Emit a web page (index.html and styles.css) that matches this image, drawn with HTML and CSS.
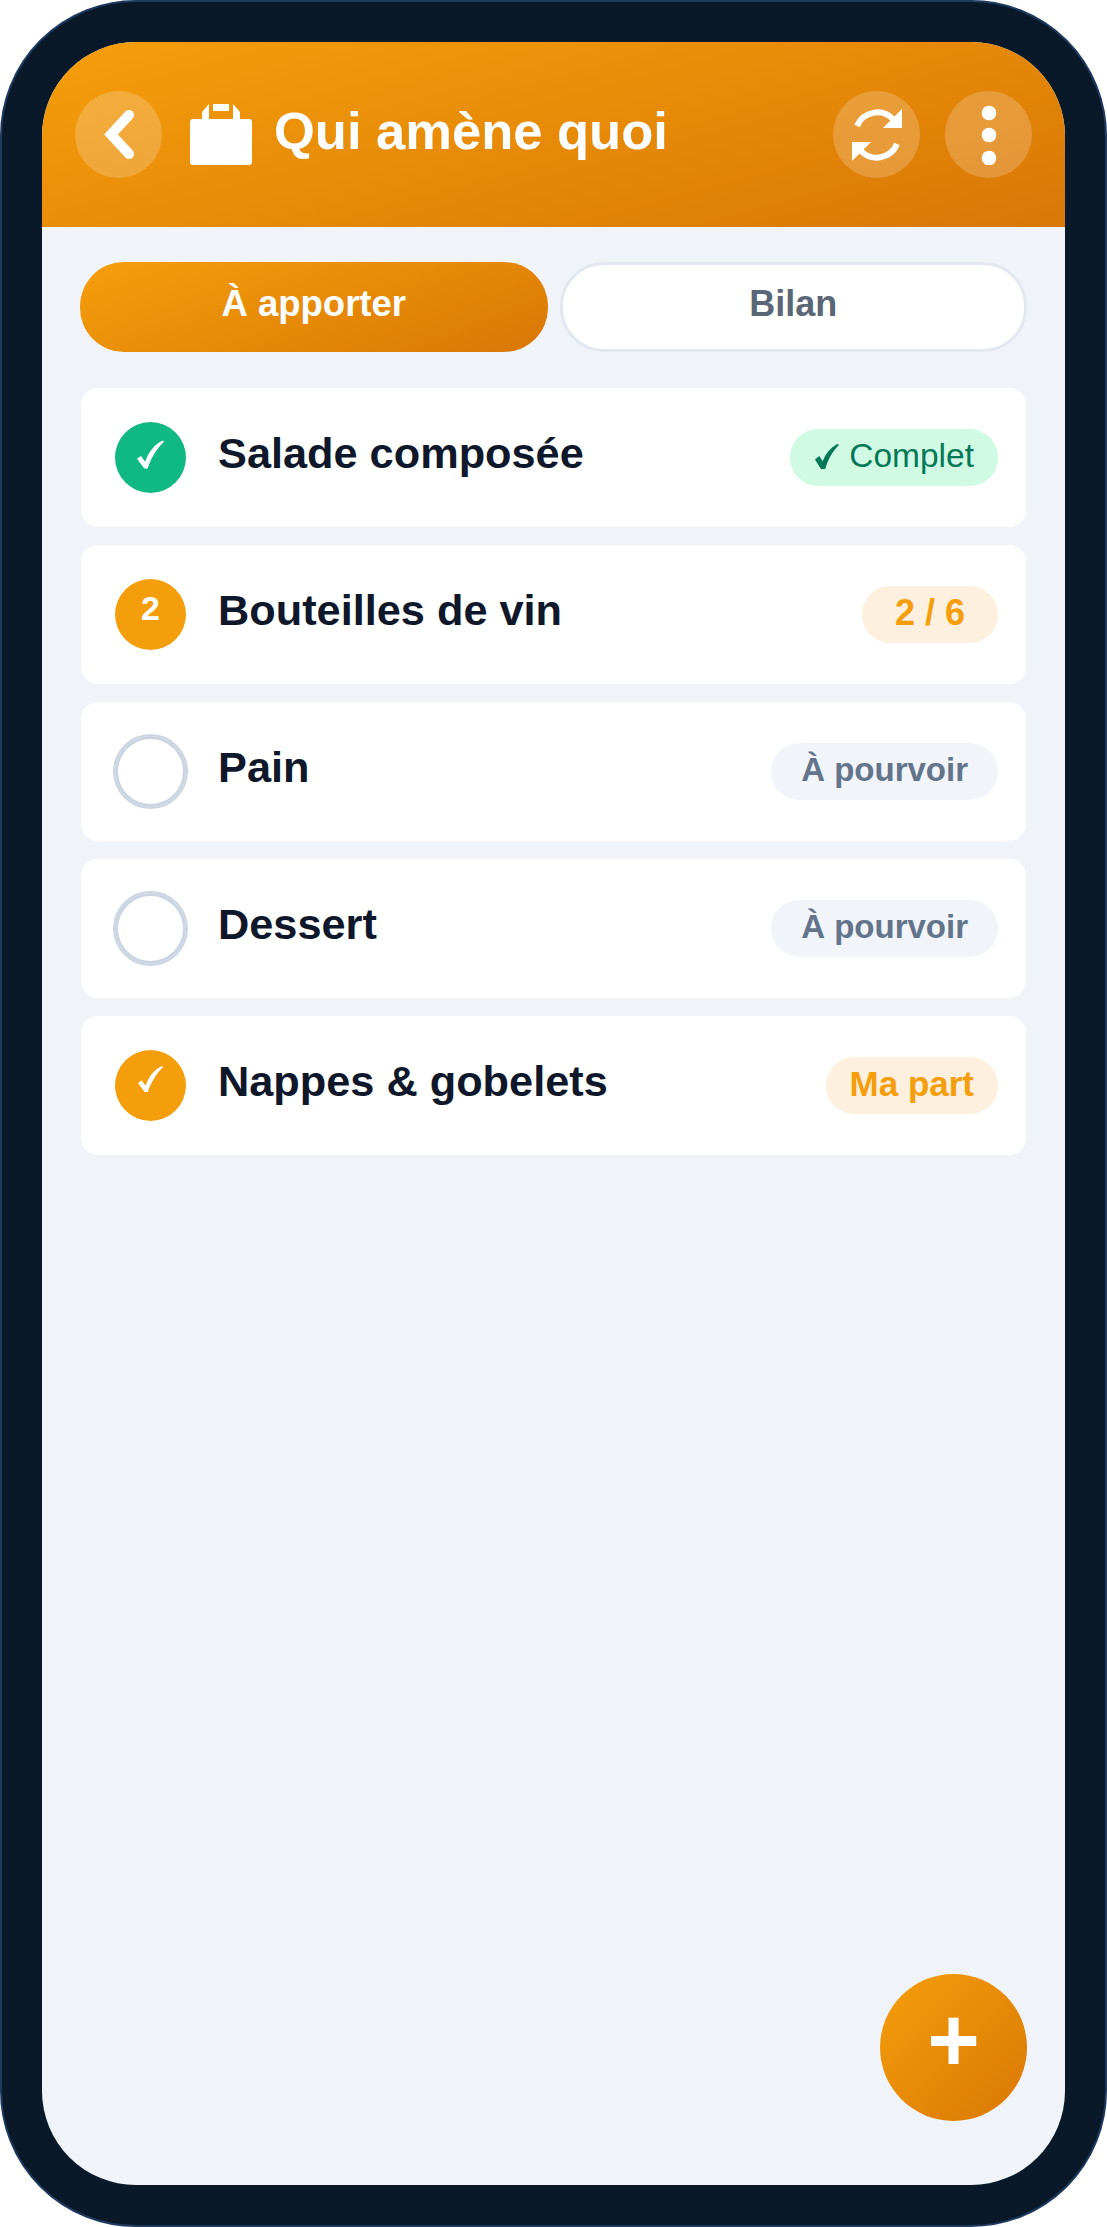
FILE: index.html

```html
<!DOCTYPE html>
<html lang="fr">
<head>
    <meta charset="UTF-8">
    <meta name="viewport" content="width=device-width, initial-scale=1.0">
    <title>Qui amène quoi</title>
    <link rel="stylesheet" href="styles.css">
</head>
<body>
    <div class="phone">
        <div class="screen">
            <header class="topbar">
                <button class="round-btn">
                    <svg width="30" height="49" viewBox="0 0 30 49">
                        <polyline points="25,5 7,24.5 25,44" fill="none" stroke="#fff" stroke-width="10" stroke-linecap="round"/>
                    </svg>
                </button>
                <svg class="bag" width="62" height="62" viewBox="0 0 62 62" fill="#fff">
                    <path d="M3 16H59Q62 16 62 19V59Q62 62 59 62H3Q0 62 0 59V19Q0 16 3 16Z"/>
                    <path d="M12 16V9L19 1V16Z"/>
                    <path d="M50 16V9L43 1V16Z"/>
                    <rect x="23" y="1" width="16" height="7"/>
                </svg>
                <h1 class="title">Qui amène quoi</h1>
                <button class="round-btn">
                    <svg width="52" height="52" viewBox="0 0 52 52">
                        <path d="M6 17A22 22 0 0 1 42 10" fill="none" stroke="#fff" stroke-width="6"/>
                        <path d="M51 0V19H32Z" fill="#fff"/>
                        <g transform="rotate(180 26 26)">
                            <path d="M6 17A22 22 0 0 1 42 10" fill="none" stroke="#fff" stroke-width="6"/>
                            <path d="M51 0V19H32Z" fill="#fff"/>
                        </g>
                    </svg>
                </button>
                <button class="round-btn">
                    <svg width="16" height="60" viewBox="0 0 16 60">
                        <circle cx="8" cy="8" r="7.3" fill="#fff"/>
                        <circle cx="8" cy="30" r="7.3" fill="#fff"/>
                        <circle cx="8" cy="53" r="7.3" fill="#fff"/>
                    </svg>
                </button>
            </header>

            <div class="tabs">
                <button class="tab active">À apporter</button>
                <button class="tab">Bilan</button>
            </div>

            <div class="list">
                <div class="item">
                    <span class="mark green">
                        <svg class="tick" width="27" height="29" viewBox="0 0 28 29">
                            <path d="M0 19L4 16L8.5 22C12 12 18 4 27 0L28 1C21 8 14.5 18 11 29H7.5Z" fill="#fff"/>
                        </svg>
                    </span>
                    <span class="name">Salade composée</span>
                    <span class="badge done">
                        <svg width="26" height="25" viewBox="0 0 28 29">
                            <path d="M0 18L5 14L9 20C12 12 18 4 26 0L28 1C21 8 15 18 12 29H7Z" fill="#047857"/>
                        </svg>
                        Complet
                    </span>
                </div>
                <div class="item">
                    <span class="mark orange number">2</span>
                    <span class="name">Bouteilles de vin</span>
                    <span class="badge partial count">2 / 6</span>
                </div>
                <div class="item">
                    <span class="mark empty"></span>
                    <span class="name">Pain</span>
                    <span class="badge open">À pourvoir</span>
                </div>
                <div class="item">
                    <span class="mark empty"></span>
                    <span class="name">Dessert</span>
                    <span class="badge open">À pourvoir</span>
                </div>
                <div class="item">
                    <span class="mark orange">
                        <svg class="tick small" width="25" height="26" viewBox="0 0 28 29">
                            <path d="M0 19L4 16L8.5 22C12 12 18 4 27 0L28 1C21 8 14.5 18 11 29H7.5Z" fill="#fff"/>
                        </svg>
                    </span>
                    <span class="name">Nappes &amp; gobelets</span>
                    <span class="badge partial">Ma part</span>
                </div>
            </div>

            <button class="fab">+</button>
        </div>
    </div>
</body>
</html>
```

FILE: styles.css

```css
* {
    box-sizing: border-box;
}

body {
    margin: 0;
    background-color: #fff;
    font-family: "Liberation Sans", Arial, sans-serif;
}

button {
    font-family: inherit;
    border: none;
    padding: 0;
    cursor: pointer;
}

.phone {
    width: 1107px;
    height: 2227px;
    padding: 40px;
    background-color: #0a1929;
    border: 2px solid #1e3a5f;
    border-radius: 136px;
}

.screen {
    position: relative;
    height: 100%;
    background-color: #f0f4f8;
    border-radius: 94px;
    overflow: hidden;
}

/* Barre du haut */
.topbar {
    display: flex;
    align-items: flex-start;
    height: 185px;
    padding: 49px 33px 0;
    background: linear-gradient(165deg, #f59e0b, #d97706);
}

.round-btn {
    display: flex;
    align-items: center;
    justify-content: center;
    flex: none;
    width: 87px;
    height: 87px;
    margin-left: 25px;
    border-radius: 50%;
    background-color: rgba(255, 255, 255, 0.2);
}

.topbar .round-btn:first-child {
    margin-left: 0;
}

.bag {
    flex: none;
    margin: 12px 22px 0 28px;
}

.title {
    flex: 1;
    margin: 11px 0 0;
    font-size: 52.5px;
    line-height: 58px;
    font-weight: 700;
    color: #fff;
}

/* Onglets */
.tabs {
    display: grid;
    grid-template-columns: 1fr 1fr;
    gap: 12px;
    padding: 35px 38px 0;
}

.tab {
    height: 90px;
    padding-bottom: 6px;
    border-radius: 44px;
    font-size: 36px;
    font-weight: 700;
    color: #5b6676;
    background-color: #fff;
    border: 3px solid #e2e8f0;
}

.tab.active {
    font-size: 36.5px;
    color: #fff;
    border: none;
    background: linear-gradient(160deg, #f59e0b, #d97706);
}

/* Liste */
.list {
    display: flex;
    flex-direction: column;
    gap: 18px;
    padding: 36px 39px 0;
}

.item {
    display: flex;
    align-items: center;
    height: 139px;
    padding: 0 28px 0 34px;
    border-radius: 17px;
    background-color: #fff;
}

.mark {
    display: flex;
    align-items: center;
    justify-content: center;
    flex: none;
    width: 71px;
    height: 71px;
    border-radius: 50%;
    font-size: 34px;
    font-weight: 700;
    color: #fff;
}

.mark.number {
    padding-bottom: 12px;
}

.mark.green {
    background-color: #10b981;
}

.mark.orange {
    background-color: #f59e0b;
}

.mark.empty {
    box-shadow: inset 0 0 0 3px #cbd5e1, 0 0 0 2px #cbd5e1;
}

.tick {
    margin-bottom: 7px;
}

.tick.small {
    margin-bottom: 14px;
}

.name {
    flex: 1;
    margin: 0 0 8px 32px;
    font-size: 43.3px;
    font-weight: 700;
    color: #0f172a;
}

.badge {
    display: flex;
    align-items: center;
    gap: 9px;
    flex: none;
    height: 57px;
    padding: 0 24px 3px;
    border-radius: 28px;
    font-size: 35px;
    font-weight: 700;
}

.badge.done {
    font-size: 33.5px;
    font-weight: 400;
    color: #047857;
    background-color: #d1fae5;
}

.badge.partial {
    color: #f59e0b;
    background-color: #fef0de;
}

.badge.count {
    padding: 0 33px 3px;
    font-size: 36px;
}

.badge.open {
    padding: 0 30px 3px;
    font-size: 33px;
    color: #64748b;
    background-color: #f1f5f9;
}

.fab {
    position: absolute;
    right: 38px;
    bottom: 64px;
    width: 147px;
    height: 147px;
    padding-bottom: 14px;
    border-radius: 50%;
    font-size: 90px;
    font-weight: 700;
    color: #fff;
    background: linear-gradient(135deg, #f59e0b, #d97706);
}
```
